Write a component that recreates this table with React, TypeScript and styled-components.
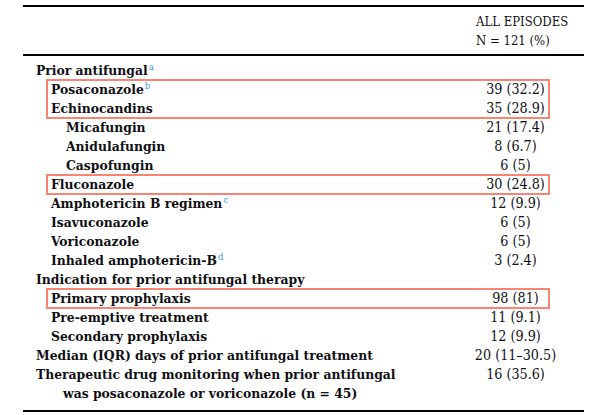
import React from 'react'
import styled, { createGlobalStyle } from 'styled-components'

const GlobalStyle = createGlobalStyle`
  html, body {
    margin: 0;
    padding: 0;
    background: #ffffff;
  }
  body {
    font-family: "DejaVu Serif Condensed", "DejaVu Serif", "Liberation Serif", serif;
    font-stretch: condensed;
    color: #0f0f14;
  }
`

const Page = styled.div`
  width: 608px;
  height: 415px;
  padding: 5px 24px 0 23px;
  box-sizing: border-box;
`

const Rule = styled.div`
  height: 2px;
  background: #000;
`

const Header = styled.div`
  display: grid;
  grid-template-columns: 1fr 137px;
  padding: 5px 0 4px;
  font-size: 13px;
  line-height: 19px;
`

const HeaderCell = styled.div`
  grid-column: 2;
  padding-left: 29px;
  white-space: nowrap;
`

const Body = styled.div`
  display: flex;
  flex-direction: column;
  padding: 5px 0 7px;
`

const Row = styled.div`
  display: grid;
  grid-template-columns: 1fr 137px;
  line-height: 19px;
`

const Label = styled.div<{ $level: number }>`
  font-weight: 700;
  font-size: 13.75px;
  white-space: nowrap;
  padding-left: ${p => 13 + p.$level * 15}px;
`

const WrapLabel = styled.div`
  font-weight: 700;
  font-size: 13.75px;
  white-space: nowrap;
  padding-left: 40px;
  text-indent: -27px;
`

const Value = styled.div`
  font-size: 14.2px;
  text-align: center;
  white-space: nowrap;
`

const Note = styled.sup`
  color: #3d9be0;
  font-weight: 400;
  font-size: 9.5px;
  line-height: 0;
  vertical-align: 5px;
  margin-left: 1px;
`

const Highlight = styled.div`
  margin: 0 35px 0 24px;
  outline: 2px solid #f88573;
  outline-offset: -1px;

  & > ${Row} {
    margin: 0 -35px 0 -24px;
  }
`

type Item = { label: string, note?: string, level: number, value?: string }

const TableRow = ({ item }: { item: Item }): JSX.Element => (
  <Row>
    <Label $level={item.level}>
      {item.label}
      {item.note !== undefined && <Note>{item.note}</Note>}
    </Label>
    <Value>{item.value}</Value>
  </Row>
)

export default function App (): JSX.Element {
  return (
    <>
      <GlobalStyle />
      <Page>
        <Rule />
        <Header>
          <HeaderCell>ALL EPISODES</HeaderCell>
          <HeaderCell>N = 121 (%)</HeaderCell>
        </Header>
        <Rule />
        <Body>
          <TableRow item={{ label: 'Prior antifungal', note: 'a', level: 0 }} />
          <Highlight>
            <TableRow item={{ label: 'Posaconazole', note: 'b', level: 1, value: '39 (32.2)' }} />
            <TableRow item={{ label: 'Echinocandins', level: 1, value: '35 (28.9)' }} />
          </Highlight>
          <TableRow item={{ label: 'Micafungin', level: 2, value: '21 (17.4)' }} />
          <TableRow item={{ label: 'Anidulafungin', level: 2, value: '8 (6.7)' }} />
          <TableRow item={{ label: 'Caspofungin', level: 2, value: '6 (5)' }} />
          <Highlight>
            <TableRow item={{ label: 'Fluconazole', level: 1, value: '30 (24.8)' }} />
          </Highlight>
          <TableRow item={{ label: 'Amphotericin B regimen', note: 'c', level: 1, value: '12 (9.9)' }} />
          <TableRow item={{ label: 'Isavuconazole', level: 1, value: '6 (5)' }} />
          <TableRow item={{ label: 'Voriconazole', level: 1, value: '6 (5)' }} />
          <TableRow item={{ label: 'Inhaled amphotericin-B', note: 'd', level: 1, value: '3 (2.4)' }} />
          <TableRow item={{ label: 'Indication for prior antifungal therapy', level: 0 }} />
          <Highlight>
            <TableRow item={{ label: 'Primary prophylaxis', level: 1, value: '98 (81)' }} />
          </Highlight>
          <TableRow item={{ label: 'Pre-emptive treatment', level: 1, value: '11 (9.1)' }} />
          <TableRow item={{ label: 'Secondary prophylaxis', level: 1, value: '12 (9.9)' }} />
          <TableRow item={{ label: 'Median (IQR) days of prior antifungal treatment', level: 0, value: '20 (11–30.5)' }} />
          <Row>
            <WrapLabel>
              Therapeutic drug monitoring when prior antifungal
              <br />
              was posaconazole or voriconazole (n = 45)
            </WrapLabel>
            <Value>16 (35.6)</Value>
          </Row>
        </Body>
        <Rule />
      </Page>
    </>
  )
}
